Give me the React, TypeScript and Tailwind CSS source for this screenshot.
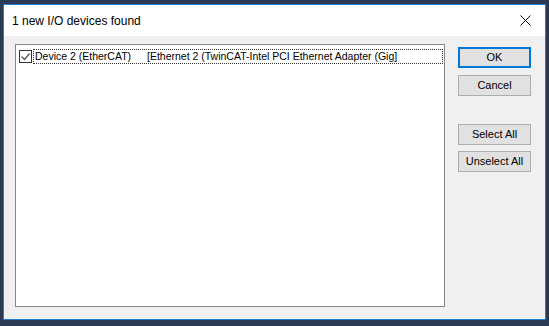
export default function App() {
  const btn =
    'w-[73px] h-[21px] flex items-center justify-center bg-[#e1e1e1] text-[11px] text-black';

  return (
    <div className="w-[549px] h-[326px] bg-[#2a3a55] pt-[4px] pl-[3px]" style={{ fontFamily: '"Liberation Sans", Arial, sans-serif' }}>
      <div className="w-[543px] h-[316px] border border-[#1a7fd4] flex flex-col bg-[#f0f0f0]">
        {/* title bar */}
        <div className="h-[31px] bg-white flex items-center justify-between pl-[8px] pr-[14px] shrink-0">
          <span className="text-[12px] text-black">1 new I/O devices found</span>
          <svg width="11" height="11" viewBox="0 0 11 11">
            <path d="M0.5 0.5 L10.5 10.5 M10.5 0.5 L0.5 10.5" stroke="#000" strokeWidth="1" />
          </svg>
        </div>

        {/* body */}
        <div className="flex-1 flex pl-[11px] pt-[8px]">
          <div className="w-[430px] h-[263px] bg-white border border-[#828790] pt-[4px] pl-[3px] pr-[1px]">
            <div className="flex items-center h-[15px]">
              <div className="w-[13px] h-[13px] border border-[#333] bg-white flex items-center justify-center shrink-0">
                <svg width="11" height="11" viewBox="0 0 11 11">
                  <path d="M1.5 5.5 L4.5 8.5 L9.5 2.5" stroke="#555" strokeWidth="1.3" fill="none" />
                </svg>
              </div>
              <div className="ml-[1px] flex-1 h-[15px] flex items-center border border-dotted border-[#333] text-[10.5px] text-black leading-none">
                <span className="w-[113px] pl-[1px]">Device 2 (EtherCAT)</span>
                <span>[Ethernet 2 (TwinCAT-Intel PCI Ethernet Adapter (Gig]</span>
              </div>
            </div>
          </div>

          <div className="ml-[13px] mt-[3px] flex flex-col">
            <div className={btn + ' border-2 border-[#0078d7]'}>OK</div>
            <div className={btn + ' mt-[7px] border border-[#adadad]'}>Cancel</div>
            <div className={btn + ' mt-[28px] border border-[#adadad]'}>Select All</div>
            <div className={btn + ' mt-[6px] border border-[#adadad]'}>Unselect All</div>
          </div>
        </div>
      </div>
    </div>
  );
}
